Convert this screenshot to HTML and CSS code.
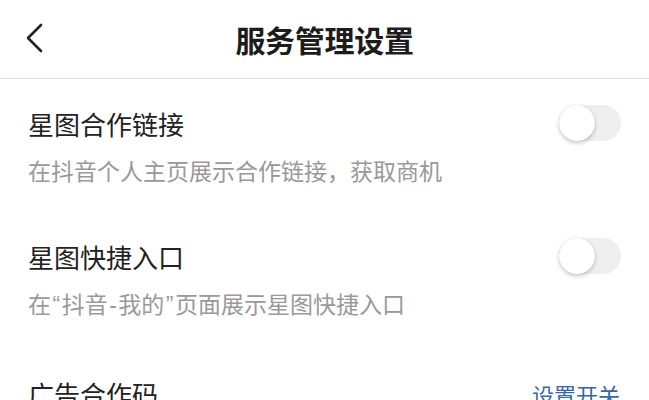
FILE: index.html
```
<!DOCTYPE html>
<html lang="zh-CN">
<head>
<meta charset="utf-8">
<title>服务管理设置</title>
<link rel="stylesheet" href="styles.css">
</head>
<body>
<div class="page">
  <header class="nav">
    <span class="back">
      <svg width="20" height="30" viewBox="0 0 20 30"><path d="M17 2 L4 15 L17 28" fill="none" stroke="#222" stroke-width="2.6" stroke-linecap="round" stroke-linejoin="round"/></svg>
    </span>
    <h1 class="nav-title">服务管理设置</h1>
  </header>
  <section class="item">
    <div class="row">
      <div class="item-title">星图合作链接</div>
      <div class="switch"><span class="knob"></span></div>
    </div>
    <div class="item-desc">在抖音个人主页展示合作链接，获取商机</div>
  </section>
  <section class="item">
    <div class="row">
      <div class="item-title">星图快捷入口</div>
      <div class="switch"><span class="knob"></span></div>
    </div>
    <div class="item-desc">在<span class="latin">“</span>抖音<span class="latin">-</span>我的<span class="latin">”</span>页面展示星图快捷入口</div>
  </section>
  <section class="item item-last">
    <div class="row">
      <div class="item-title">广告合作码</div>
      <a class="link">设置开关</a>
    </div>
  </section>
</div>
</body>
</html>
```
FILE: styles.css
```
html, body {
  margin: 0;
  padding: 0;
  background: #ffffff;
}
body {
  font-family: "Noto Sans CJK SC", "Noto Sans", sans-serif;
  color: #222222;
}
.page {
  width: 649px;
  height: 400px;
  overflow: hidden;
}
.nav {
  position: relative;
  height: 78px;
  border-bottom: 1px solid #e3e3e3;
  display: flex;
  align-items: center;
  justify-content: center;
}
.back {
  position: absolute;
  left: 24px;
  top: 23px;
  width: 20px;
  height: 30px;
  display: flex;
}
.nav-title {
  margin: 0;
  font-size: 30px;
  font-weight: 700;
  line-height: 40px;
  color: #1c1c1c;
  letter-spacing: -0.3px;
}
.item {
  padding: 27px 28px 26px 28px;
  display: flex;
  flex-direction: column;
  gap: 12px;
}
.row {
  display: flex;
  align-items: center;
  justify-content: space-between;
  height: 36px;
}
.item-title {
  font-size: 26px;
  line-height: 36px;
  color: #222222;
}
.item-desc {
  font-size: 23px;
  line-height: 32px;
  color: #999999;
}
.latin {
  font-family: "Liberation Sans", "Noto Sans", sans-serif;
  margin: 0 1.5px;
}
.switch {
  width: 62px;
  height: 36px;
  border-radius: 18px;
  background: #efefef;
  position: relative;
  margin-top: -2px;
}
.knob {
  position: absolute;
  left: 0;
  top: 0;
  width: 36px;
  height: 36px;
  border-radius: 50%;
  background: #ffffff;
  box-shadow: 0 2px 4px rgba(0, 0, 0, 0.22), 0 0 1px rgba(0, 0, 0, 0.12);
}
.item-last {
  padding-top: 29px;
}
.link {
  font-size: 22px;
  line-height: 36px;
  color: #3466a8;
  margin-right: 1px;
}
```
